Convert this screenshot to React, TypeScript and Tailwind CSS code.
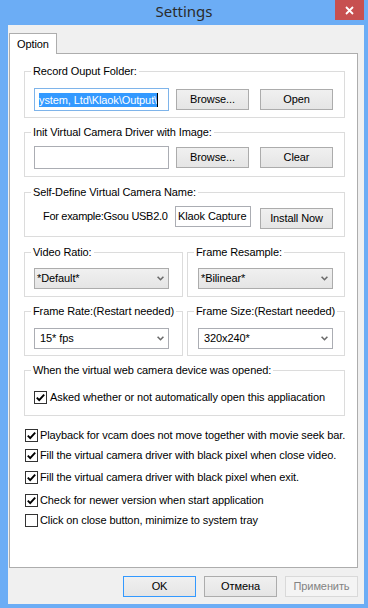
import React from 'react';

const Check = ({ checked }: { checked?: boolean }) => (
  <span className="w-[13px] h-[13px] border border-[#333333] bg-white flex items-center justify-center shrink-0">
    {checked && (
      <svg width="11" height="11" viewBox="0 0 11 11">
        <path d="M1.8 5.6 L4.2 8.2 L9.2 2.6" fill="none" stroke="#000" strokeWidth="1.9" />
      </svg>
    )}
  </span>
);

const Btn = ({ label, className = '' }: { label: string; className?: string }) => (
  <div
    className={`h-[21px] w-[73px] shrink-0 flex items-center justify-center border border-[#acacac] bg-linear-to-b from-[#f0f0f0] to-[#e5e5e5] ${className}`}
  >
    {label}
  </div>
);

const Chevron = () => (
  <svg width="7" height="5" viewBox="0 0 7 5" className="shrink-0">
    <polyline points="0.6,0.8 3.5,3.7 6.4,0.8" fill="none" stroke="#6a6a6a" strokeWidth="1.6" />
  </svg>
);

const Combo = ({ text, white, className = '' }: { text: string; white?: boolean; className?: string }) => (
  <div
    className={`w-[135px] h-[21px] flex items-center justify-between pr-[4px] border ${
      white
        ? 'bg-white border-[#abadb3] pl-[5px]'
        : 'bg-linear-to-b from-[#f0f0f0] to-[#e5e5e5] border-[#acacac] pl-[2px]'
    } ${className}`}
  >
    <span>{text}</span>
    <Chevron />
  </div>
);

const Group = ({
  label,
  className = '',
  children,
}: {
  label: string;
  className?: string;
  children: React.ReactNode;
}) => (
  <fieldset className={`border border-[#dcdcdc] ${className}`}>
    <legend className="ml-[6px] px-[2px] leading-[13px]">{label}</legend>
    {children}
  </fieldset>
);

export default function App() {
  return (
    <div className="w-[368px] h-[608px] bg-[#6cadf5] flex flex-col font-['Liberation_Sans',Arial,sans-serif] text-[11px] leading-[13px] tracking-[-0.1px] text-black">
      {/* Title bar */}
      <div className="relative h-[25px] flex justify-center shrink-0">
        <span className="font-['Noto_Sans',sans-serif] text-[15px] leading-[20px] tracking-normal text-[#2b2b2b] pt-[1px]">Settings</span>
        <div className="absolute right-[4px] top-0 w-[29px] h-[20px] bg-[#c75050] flex items-center justify-center">
          <svg width="9" height="9" viewBox="0 0 9 9">
            <path d="M1 1 L8 8 M8 1 L1 8" stroke="#fff" strokeWidth="1.8" />
          </svg>
        </div>
      </div>

      {/* Client area */}
      <div className="ml-[8px] w-[356px] h-[579px] bg-[#f0f0f0] flex flex-col pt-[8px] pl-[1px]">
        {/* Tab strip */}
        <div className="flex h-[21px] w-[349px] shrink-0">
          <div className="w-[48px] border-l border-t border-r border-[#adadad] bg-white flex items-center pl-[7px]">
            Option
          </div>
          <div className="flex-1 border-b border-[#adadad]" />
        </div>

        {/* Tab page */}
        <div className="w-[349px] h-[514px] shrink-0 bg-white border-l border-r border-b border-[#adadad] pl-[14px] pt-[11px] flex flex-col">
          <Group label="Record Ouput Folder:" className="w-[321px]">
            <div className="flex items-center pt-[10px] pb-[6px] pl-[9px]">
              <div className="w-[135px] h-[23px] shrink-0 border border-[#7eb4ea] bg-white flex items-center pl-[4px] overflow-hidden">
                <span className="bg-[#3399ff] text-white leading-[14px] whitespace-nowrap">ystem, Ltd\Klaok\Output\</span>
                <span className="w-px h-[14px] bg-black shrink-0" />
              </div>
              <Btn label="Browse..." className="ml-[7px]" />
              <Btn label="Open" className="ml-[11px]" />
            </div>
          </Group>

          <Group label="Init Virtual Camera Driver with Image:" className="w-[321px] mt-[8px]">
            <div className="flex items-center pt-[7px] pb-[7px] pl-[9px]">
              <div className="w-[135px] h-[23px] shrink-0 border border-[#abadb3] bg-white" />
              <Btn label="Browse..." className="ml-[7px]" />
              <Btn label="Clear" className="ml-[11px]" />
            </div>
          </Group>

          <Group label="Self-Define Virtual Camera Name:" className="w-[321px] mt-[9px]">
            <div className="flex items-start h-[23px] box-content pt-[7px] pb-[7px] pl-[18px]">
              <span className="w-[132px] shrink-0 h-[20px] flex items-center whitespace-nowrap tracking-[-0.3px]">
                For example:Gsou USB2.0
              </span>
              <div className="w-[76px] h-[21px] shrink-0 border border-[#abadb3] bg-white flex items-center pl-[2px] overflow-hidden whitespace-nowrap">
                Klaok Capture
              </div>
              <Btn label="Install Now" className="ml-[9px] mt-[2px]" />
            </div>
          </Group>

          <div className="flex gap-[4px] mt-[9px]">
            <Group label="Video Ratio:" className="w-[159px]">
              <div className="pt-[9px] pb-[7px] pl-[9px]">
                <Combo text="*Default*" />
              </div>
            </Group>
            <Group label="Frame Resample:" className="w-[158px]">
              <div className="pt-[9px] pb-[7px] pl-[10px]">
                <Combo text="*Bilinear*" />
              </div>
            </Group>
          </div>

          <div className="flex gap-[4px] mt-[8px]">
            <Group label="Frame Rate:(Restart needed)" className="w-[159px]">
              <div className="pt-[10px] pb-[6px] pl-[9px]">
                <Combo text="15* fps" white />
              </div>
            </Group>
            <Group label="Frame Size:(Restart needed)" className="w-[158px]">
              <div className="pt-[10px] pb-[6px] pl-[10px]">
                <Combo text="320x240*" white />
              </div>
            </Group>
          </div>

          <Group label="When the virtual web camera device was opened:" className="w-[321px] mt-[8px]">
            <div className="flex items-center gap-[3px] pt-[14px] pb-[11px] pl-[9px]">
              <Check checked />
              <span>Asked whether or not automatically open this appliacation</span>
            </div>
          </Group>

          <div className="flex flex-col pl-[1px]">
            <label className="flex items-center gap-[2px] h-[13px] mt-[13px] whitespace-nowrap">
              <Check checked />
              <span>Playback for vcam does not move together with movie seek bar.</span>
            </label>
            <label className="flex items-center gap-[2px] h-[13px] mt-[7px] whitespace-nowrap">
              <Check checked />
              <span>Fill the virtual camera driver with black pixel when close video.</span>
            </label>
            <label className="flex items-center gap-[2px] h-[13px] mt-[9px] whitespace-nowrap">
              <Check checked />
              <span>Fill the virtual camera driver with black pixel when exit.</span>
            </label>
            <label className="flex items-center gap-[2px] h-[13px] mt-[10px] whitespace-nowrap">
              <Check checked />
              <span>Check for newer version when start application</span>
            </label>
            <label className="flex items-center gap-[2px] h-[13px] mt-[7px] whitespace-nowrap">
              <Check />
              <span>Click on close button, minimize to system tray</span>
            </label>
          </div>
        </div>

        {/* Dialog buttons */}
        <div className="flex gap-[8px] mt-[8px] pl-[114px]">
          <Btn label="OK" className="!border-[#3399ff]" />
          <Btn label="Отмена" />
          <div className="h-[21px] w-[73px] flex items-center justify-center border border-[#d9d9d9] bg-[#f4f4f4] text-[#838383]">
            Применить
          </div>
        </div>
      </div>
    </div>
  );
}
